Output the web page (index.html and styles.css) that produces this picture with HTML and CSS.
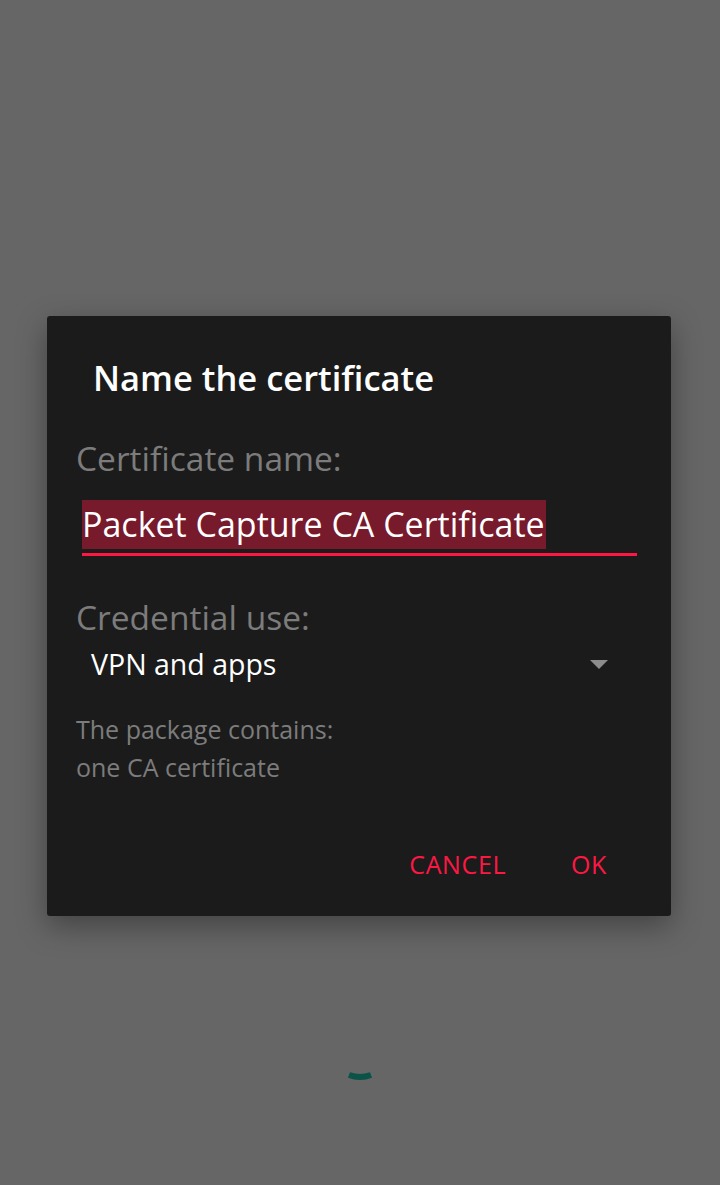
FILE: index.html
```html
<!DOCTYPE html>
<html>
<head>
<meta charset="utf-8">
<title>Name the certificate</title>
<link rel="stylesheet" href="styles.css">
</head>
<body>

<div class="screen">
	<div class="dialog">
		<h1 class="title">Name the certificate</h1>

		<div class="label">Certificate name:</div>
		<div class="field">
			<span class="sel">Packet Capture CA Certificate</span>
		</div>

		<div class="label label-use">Credential use:</div>
		<div class="spinner-row">
			<span class="value">VPN and apps</span>
			<span class="arrow"></span>
		</div>

		<div class="info">The package contains:<br>one CA certificate</div>

		<div class="buttons">
			<span class="btn">CANCEL</span>
			<span class="btn">OK</span>
		</div>
	</div>

	<svg class="loader" width="30" height="14" viewBox="0 0 30 14">
		<path d="M4 4 Q15 8 26 4" fill="none" stroke="#0b5247" stroke-width="6"/>
	</svg>
</div>

</body>
</html>
```

FILE: styles.css
```css
* {margin:0; padding:0;}

html, body {width:720px; height:1185px; background:#666666; overflow:hidden;}

body {font-family:"Open Sans", "Noto Sans", sans-serif;}

.screen {position:relative; width:720px; height:1185px; padding-top:316px; box-sizing:border-box;}

.dialog {
	margin-left:47px; width:624px; height:600px; box-sizing:border-box;
	background:#1b1b1b; border-radius:3px;
	box-shadow:0 10px 30px rgba(0,0,0,0.35);
	padding:39px 29px 0 29px;
	display:flex; flex-direction:column;
}

.title {font-size:34.5px; font-weight:600; color:#fff; line-height:46px; padding-left:17px;}

.label {font-size:33.5px; color:#7c7c7c; line-height:42px; margin-top:36px;}
.label-use {margin-top:40px;}

.field {margin:21px 5px 0 6px; padding-bottom:4px; border-bottom:3px solid #ff1744;}
.sel {display:inline-block; background:#761a2c; color:#fff; font-size:34px; line-height:49px; padding-right:1px;}

.spinner-row {display:flex; align-items:center; justify-content:space-between; padding:0 34px 0 15px; height:50px; margin-top:1px;}
.value {font-size:28.5px; color:#fff;}
.arrow {width:0; height:0; border-left:9px solid transparent; border-right:9px solid transparent; border-top:9px solid #8c8c8c;}

.info {font-size:25px; color:#7c7c7c; line-height:38px; margin-top:21px;}

.buttons {display:flex; justify-content:flex-end; gap:65px; padding-right:35px; margin-top:58px; line-height:40px;}
.btn {font-size:25px; color:#ff1744; letter-spacing:0.6px;}

.loader {position:absolute; left:345px; top:1071px;}
```
